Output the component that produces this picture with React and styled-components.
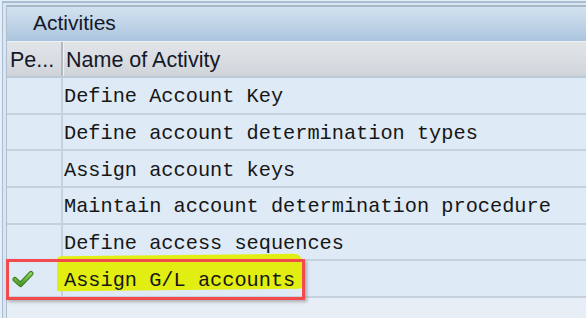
import React from "react";
import styled, { createGlobalStyle } from "styled-components";

const Global = createGlobalStyle`
  html, body { margin: 0; padding: 0; background: #e6edf4; }
  body { width: 586px; height: 318px; overflow: hidden; }
`;

const Outer = styled.div`
  height: 318px;
  box-sizing: border-box;
  padding: 1px 0 0 2px;
  background: #e6edf4;
`;

const Panel = styled.div`
  height: 100%;
  box-sizing: border-box;
  border-top: 2px solid #a7bdd5;
  border-left: 1px solid #a7bdd5;
  background: #dbe5ef;
  padding: 2px 0 0 3px;
`;

const Inner = styled.div`
  height: 100%;
  box-sizing: border-box;
  border-top: 2px solid #a8b7c8;
  border-left: 1px solid #b0bfcf;
  background: #e8eef5;
  display: flex;
  flex-direction: column;
`;

const Title = styled.div`
  height: 34px;
  box-sizing: border-box;
  display: flex;
  align-items: center;
  padding: 0 0 3px 26px;
  background: linear-gradient(#d2e1ef, #c0d4e7 50%, #abc4de);
  font-family: "Liberation Sans", Arial, sans-serif;
  font-size: 21px;
  color: #14182a;
`;

const Grid = styled.div`
  display: grid;
  grid-template-columns: 56px 1fr;
`;

const Header = styled(Grid)`
  height: 37px;
  box-sizing: border-box;
  border-top: 1px solid #edf1f5;
  border-bottom: 2px solid #bccad8;
  background: linear-gradient(#e1e4e7, #d8dce1 60%, #cfd4da);
  font-family: "Liberation Sans", Arial, sans-serif;
  font-size: 21.5px;
  color: #141828;
`;

const HeadCell = styled.div`
  display: flex;
  align-items: center;
  padding: 2px 0 0 ${(p) => p.$pad}px;
  white-space: nowrap;
  overflow: hidden;
  ${(p) => p.$divider && `border-right: 2px solid #b3b9c0; box-shadow: 1px 0 0 #eef1f4;`}
`;

const Row = styled(Grid)`
  position: relative;
  height: 36.67px;
  box-sizing: border-box;
  border-bottom: 2px solid #c5d2de;
  background: #deeaf5;
`;

const StatusCell = styled.div`
  display: flex;
  align-items: center;
  padding-left: 5px;
  border-right: 2px solid #c6d2dd;
`;

const NameCell = styled.div`
  position: relative;
  display: flex;
  align-items: center;
  padding: 3px 0 0 1px;
  font-family: "Liberation Mono", "Courier New", monospace;
  font-size: 20.3px;
  color: #161616;
  white-space: nowrap;
`;

const Label = styled.span`
  position: relative;
  z-index: 1;
`;

const Highlight = styled.span`
  position: absolute;
  left: -6px;
  top: -6px;
  width: 245px;
  height: 35px;
  background: #e2ee12;
  border-radius: 4px 8px 3px 2px;
  transform: skewY(-0.6deg);
  z-index: 0;
`;

const RedBox = styled.div`
  position: absolute;
  left: -1px;
  top: -2.5px;
  width: 299px;
  height: 41px;
  box-sizing: border-box;
  border: 3px solid #f24a4d;
  box-shadow: 2px 2px 3px rgba(60, 60, 60, 0.35);
  pointer-events: none;
  z-index: 2;
`;

const Check = () => (
  <svg width="22" height="18" viewBox="0 0 22 18">
    <defs>
      <linearGradient id="g" x1="0" y1="0" x2="0" y2="1">
        <stop offset="0" stopColor="#8fd061" />
        <stop offset="1" stopColor="#4c9a26" />
      </linearGradient>
    </defs>
    <path d="M3 9.5 L8.5 14.5 L19 3.5" fill="none" stroke="#3a7d1c" strokeWidth="5" strokeLinecap="round" strokeLinejoin="round" />
    <path d="M3 9.5 L8.5 14.5 L19 3.5" fill="none" stroke="url(#g)" strokeWidth="3" strokeLinecap="round" strokeLinejoin="round" />
  </svg>
);

const activities = [
  "Define Account Key",
  "Define account determination types",
  "Assign account keys",
  "Maintain account determination procedure",
  "Define access sequences",
  "Assign G/L accounts",
];

export default function App() {
  return (
    <>
      <Global />
      <Outer>
        <Panel>
          <Inner>
            <Title>Activities</Title>
            <Header>
              <HeadCell $pad={3} $divider>Pe...</HeadCell>
              <HeadCell $pad={3}>Name of Activity</HeadCell>
            </Header>
            {activities.map((a, i) => {
              const done = i === activities.length - 1;
              return (
                <Row key={a}>
                  <StatusCell>{done && <Check />}</StatusCell>
                  <NameCell>
                    {done && <Highlight />}
                    <Label>{a}</Label>
                  </NameCell>
                  {done && <RedBox />}
                </Row>
              );
            })}
          </Inner>
        </Panel>
      </Outer>
    </>
  );
}
